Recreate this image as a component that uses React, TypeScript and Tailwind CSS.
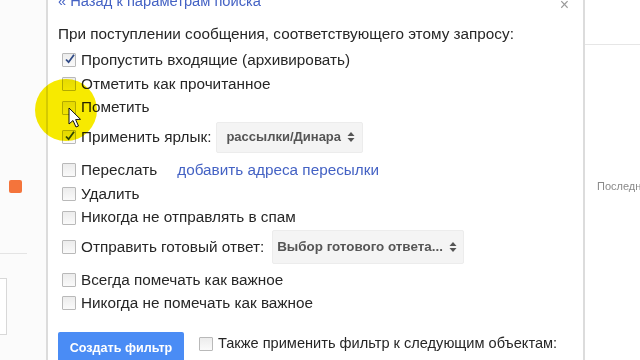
import React from "react";

const font = { fontFamily: '"Liberation Sans", Arial, sans-serif' };

function Box({ checked = false }: { checked?: boolean }) {
  return (
    <span className="relative ml-[4px] mr-[5px] flex h-[14px] w-[14px] shrink-0 items-center justify-center rounded-[1px] border border-[#b9b9b9] bg-gradient-to-b from-[#ececec] to-[#fafafa]">
      {checked && (
        <svg width="12" height="12" viewBox="0 0 12 12" className="absolute -top-[1px] left-[1px]">
          <path d="M2 6.5 L4.6 9.2 L10 1.8" fill="none" stroke="#2f4a86" strokeWidth="1.8" />
        </svg>
      )}
    </span>
  );
}

function Arrows() {
  return (
    <svg width="8" height="12" viewBox="0 0 8 12" className="ml-[6px]">
      <path d="M0.5 5 L4 1 L7.5 5 Z" fill="#555" />
      <path d="M0.5 7 L4 11 L7.5 7 Z" fill="#555" />
    </svg>
  );
}

function Row({ h, children }: { h: string; children: React.ReactNode }) {
  return <div className={`flex items-center whitespace-nowrap ${h}`}>{children}</div>;
}

export default function App() {
  return (
    <div className="relative flex h-[360px] w-[640px] overflow-hidden bg-white text-[15.3px] text-[#262626]" style={font}>
      {/* left page behind the dialog */}
      <div className="relative w-[46px] shrink-0 bg-[#fbfbfb]">
        <div className="absolute left-[9px] top-[180px] h-[13px] w-[13px] rounded-[2px] bg-[#f4743b]" />
        <div className="absolute left-0 top-[253px] h-px w-[27px] bg-[#e4e4e4]" />
        <div className="absolute -left-[4px] top-[278px] h-[57px] w-[11px] border border-[#d8d8d8] bg-white" />
      </div>

      {/* dialog */}
      <div className="relative w-[539px] shrink-0 border-x-2 border-x-[#dcdcdc] bg-white pl-[10px]">
        <div className="absolute right-[14px] -top-[7px] text-[16px] text-[#9a9a9a]">×</div>

        <div className="-mt-[7px] flex h-[17px] items-center text-[14.7px] text-[#4462c4]">« Назад к параметрам поиска</div>
        <Row h="h-[20px] mt-[14px]">При поступлении сообщения, соответствующего этому запросу:</Row>

        <Row h="h-[24px] mt-[4px]">
          <Box checked />
          Пропустить входящие (архивировать)
        </Row>
        <Row h="h-[24px]">
          <Box />
          Отметить как прочитанное
        </Row>
        <Row h="h-[23px]">
          <Box />
          Пометить
        </Row>
        <Row h="h-[34px] mt-[1px]">
          <Box checked />
          Применить ярлык:
          <div className="ml-[5px] flex h-[31px] w-[147px] items-center rounded-[2px] border border-[#ececec] bg-[#f4f4f4] pl-[9px] text-[13px] font-bold text-[#555]">
            рассылки/Динара
            <Arrows />
          </div>
        </Row>
        <Row h="h-[24px] mt-[4px]">
          <Box />
          Переслать
          <span className="ml-[20px] text-[#4462c4]">добавить адреса пересылки</span>
        </Row>
        <Row h="h-[24px]">
          <Box />
          Удалить
        </Row>
        <Row h="h-[23px]">
          <Box />
          Никогда не отправлять в спам
        </Row>
        <Row h="h-[34px] mt-[1px]">
          <Box />
          Отправить готовый ответ:
          <div className="ml-[8px] flex h-[34px] w-[192px] items-center rounded-[2px] border border-[#ececec] bg-[#f4f4f4] pl-[4px] text-[13.4px] font-bold text-[#555]">
            Выбор готового ответа...
            <Arrows />
          </div>
        </Row>
        <Row h="h-[24px] mt-[4px]">
          <Box />
          Всегда помечать как важное
        </Row>
        <Row h="h-[22px]">
          <Box />
          Никогда не помечать как важное
        </Row>

        <div className="mt-[18px] flex items-start">
          <div className="flex h-[32px] w-[126px] items-center justify-center rounded-[2px] bg-[#4a8cf5] text-[12.6px] font-bold text-white">
            Создать фильтр
          </div>
          <div className="ml-[11px] mt-[4px] flex h-[16px] items-center whitespace-nowrap text-[14.6px]">
            <Box />
            Также применить фильтр к следующим объектам:
          </div>
        </div>
      </div>

      {/* right page behind the dialog */}
      <div className="relative flex-1 bg-white">
        <div className="absolute left-0 right-0 top-[44px] h-px bg-[#e6e6e6]" />
        <div className="absolute left-[12px] top-[178px] text-[11px] text-[#8a8a8a]">Последние</div>
      </div>

      {/* presenter's highlight and cursor */}
      <div className="pointer-events-none absolute left-[35px] top-[79px] h-[62px] w-[62px] rounded-full bg-[#f7ea00] mix-blend-multiply" />
      <svg width="14" height="22" viewBox="0 0 14 22" className="pointer-events-none absolute left-[68px] top-[107px]">
        <path d="M1 1 L1 17 L5 13.5 L8 20 L10.5 19 L7.6 12.6 L12.5 12.3 Z" fill="#fff" stroke="#111" strokeWidth="1" strokeLinejoin="round" />
      </svg>
    </div>
  );
}
